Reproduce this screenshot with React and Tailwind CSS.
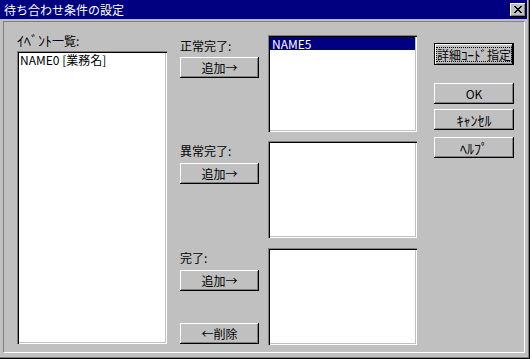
import React from "react";

const font = "font-['Noto_Sans_CJK_JP','Noto_Sans_CJK_SC',sans-serif]";

const Button = ({ children, className = "" }) => (
  <div
    className={`flex h-[21px] w-full items-center justify-center whitespace-nowrap bg-[#c0c0c0] text-[12px] leading-[14px] text-black shadow-[inset_-1px_-1px_0_#000,inset_1px_1px_0_#fff,inset_-2px_-2px_0_#808080] ${className}`}
  >
    {children}
  </div>
);

const ListBox = ({ className = "", children }) => (
  <div
    className={`bg-white p-[2px] shadow-[inset_1px_1px_0_#808080,inset_2px_2px_0_#000,inset_-1px_-1px_0_#fff,inset_-2px_-2px_0_#c0c0c0] ${className}`}
  >
    {children}
  </div>
);

// half-width katakana looks narrow in Noto, bump it a little
const Kana = ({ children, small }) => (
  <span className={small ? "text-[13px] leading-[13px]" : "text-[14px] leading-[14px]"}>{children}</span>
);

export default function App() {
  return (
    <div className={`h-[359px] w-[530px] border-b border-r border-black ${font}`}>
      <div className="flex h-full w-full flex-col border-b border-r border-[#808080] bg-[#c0c0c0]">
        {/* title bar */}
        <div className="flex h-[19px] w-[527px] items-center justify-between bg-[#000080] pl-[4px] pr-[1px]">
          <span className="text-[12px] leading-[14px] text-white">待ち合わせ条件の設定</span>
          <div className="flex h-[14px] w-[16px] items-center justify-center bg-[#c0c0c0] shadow-[inset_-1px_-1px_0_#000,inset_1px_1px_0_#fff,inset_-2px_-2px_0_#808080]">
            <svg width="8" height="7" viewBox="0 0 8 7" shapeRendering="crispEdges">
              <path d="M0 0h2v1h-2zM6 0h2v1h-2zM1 1h2v1h-2zM5 1h2v1h-2zM2 2h4v1h-4zM3 3h2v1h-2zM2 4h4v1h-4zM1 5h2v1h-2zM5 5h2v1h-2zM0 6h2v1h-2zM6 6h2v1h-2z" fill="#000" />
            </svg>
          </div>
        </div>

        {/* client */}
        <div className="ml-[3px] mt-[2px] flex h-[332px] w-[522px] border-b border-l border-r border-t border-b-white border-l-[#808080] border-r-white border-t-[#808080] pl-[13px] text-[12px] leading-[16px] text-black">
          {/* event list */}
          <div className="flex w-[150px] flex-col">
            <div className="mt-[11px] whitespace-nowrap">
              <Kana>ｲﾍﾞﾝﾄ</Kana>一覧:
            </div>
            <ListBox className="mt-[2px] h-[293px]">
              <div className="pl-[1px] leading-[14px]">NAME0 [業務名]</div>
            </ListBox>
          </div>

          {/* add buttons */}
          <div className="ml-[13px] flex w-[79px] flex-col">
            <div className="mt-[16px]">正常完了:</div>
            <Button className="mt-[3px]">追加→</Button>
            <div className="mt-[65px]">異常完了:</div>
            <Button className="mt-[4px]">追加→</Button>
            <div className="mt-[66px]">完了:</div>
            <Button className="mt-[4px]">追加→</Button>
            <Button className="mt-[32px]">←削除</Button>
          </div>

          {/* target lists */}
          <div className="ml-[9px] flex w-[149px] flex-col">
            <ListBox className="mt-[13px] h-[97px]">
              <div className="h-[13px] bg-[#000080] pl-[2px] leading-[13px] text-white">NAME5</div>
            </ListBox>
            <ListBox className="mt-[9px] h-[97px]" />
            <ListBox className="mt-[10px] h-[97px]" />
          </div>

          {/* dialog buttons */}
          <div className="ml-[17px] flex w-[80px] flex-col">
            <div className="mt-[21px] h-[22px] border border-black">
              <Button className="h-[20px]">
                <span className="whitespace-nowrap border border-dotted border-black leading-[13px]">
                  詳細<Kana small>ｺｰﾄﾞ</Kana>指定
                </span>
              </Button>
            </div>
            <Button className="mt-[18px]">OK</Button>
            <Button className="mt-[5px]">
              <Kana>ｷｬﾝｾﾙ</Kana>
            </Button>
            <Button className="mt-[7px]">
              <Kana>ﾍﾙﾌﾟ</Kana>
            </Button>
          </div>
        </div>
      </div>
    </div>
  );
}
